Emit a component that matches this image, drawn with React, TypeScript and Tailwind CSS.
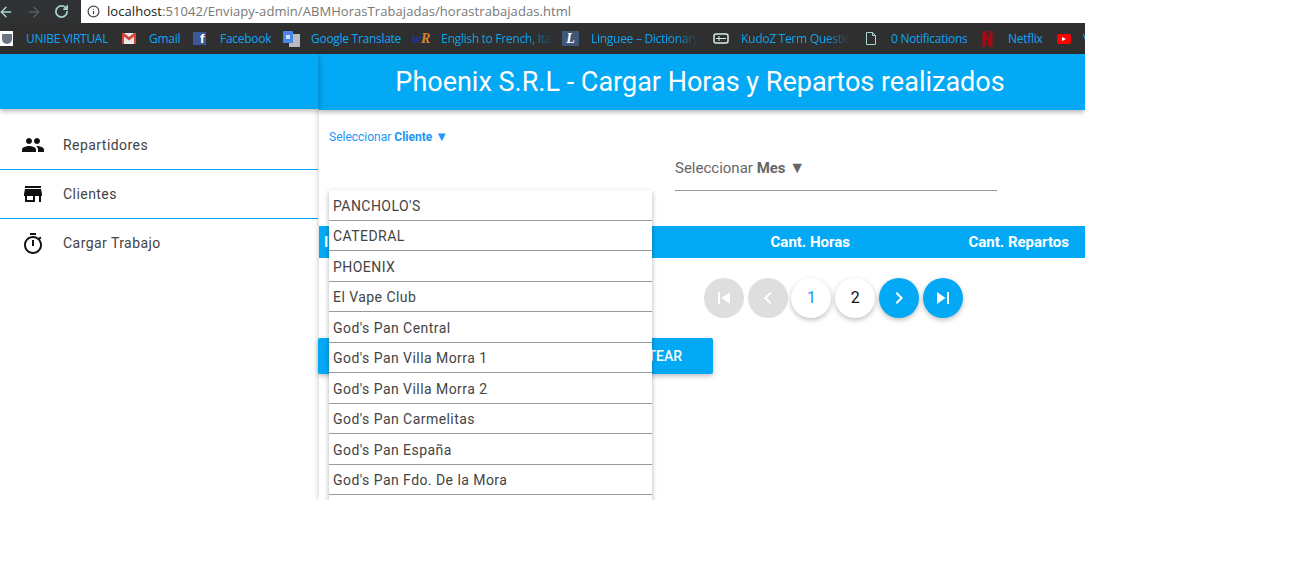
import { ArrowLeft, ArrowRight, RotateCw, Info } from "lucide-react"

const clientes = [
  "PANCHOLO'S",
  "CATEDRAL",
  "PHOENIX",
  "El Vape Club",
  "God's Pan Central",
  "God's Pan Villa Morra 1",
  "God's Pan Villa Morra 2",
  "God's Pan Carmelitas",
  "God's Pan España",
  "God's Pan Fdo. De la Mora",
  "God's Pan Luque",
]

function MaterialIcon({ d, className }: { d: string; className?: string }) {
  return (
    <svg viewBox="0 0 24 24" className={className} fill="currentColor">
      <path d={d} />
    </svg>
  )
}

const icons = {
  people:
    "M16 11c1.66 0 2.99-1.34 2.99-3S17.66 5 16 5c-1.66 0-3 1.34-3 3s1.34 3 3 3zm-8 0c1.66 0 2.99-1.34 2.99-3S9.66 5 8 5C6.34 5 5 6.34 5 8s1.34 3 3 3zm0 2c-2.33 0-7 1.17-7 3.5V19h14v-2.5c0-2.33-4.67-3.5-7-3.5zm8 0c-.29 0-.62.02-.97.05 1.16.84 1.97 1.97 1.97 3.45V19h6v-2.5c0-2.33-4.67-3.5-7-3.5z",
  store: "M20 4H4v2h16V4zm1 10v-2l-1-5H4l-1 5v2h1v6h10v-6h4v6h2v-6h1zm-9 4H6v-4h6v4z",
  timer:
    "M15 1H9v2h6V1zm-4 13h2V8h-2v6zm8.03-6.61l1.42-1.42c-.43-.51-.9-.99-1.41-1.41l-1.42 1.42C16.07 4.74 14.12 4 12 4c-4.97 0-9 4.03-9 9s4.02 9 9 9 9-4.03 9-9c0-2.12-.74-4.07-1.97-5.61zM12 20c-3.87 0-7-3.13-7-7s3.13-7 7-7 7 3.13 7 7-3.13 7-7 7z",
  first: "M6 6h2v12H6zm3.5 6l8.5 6V6z",
  prev: "M15.41 7.41L14 6l-6 6 6 6 1.41-1.41L10.83 12z",
  next: "M10 6L8.59 7.41 13.17 12l-4.58 4.59L10 18l6-6z",
  last: "M6 18l8.5-6L6 6v12zM16 6v12h2V6h-2z",
}

function BrowserBar() {
  return (
    <div className="flex h-[23px] bg-[#2f3133]">
      <div className="flex w-[81px] items-center text-[#a5d6cf]">
        <ArrowLeft className="ml-[-2px] h-[16px] w-[16px]" strokeWidth={2.2} />
        <ArrowRight className="ml-[12px] h-[16px] w-[16px] text-[#55605e]" strokeWidth={2.2} />
        <RotateCw className="ml-[12px] h-[15px] w-[15px]" strokeWidth={2.8} />
      </div>
      <div className="flex flex-1 items-center bg-white pl-[6px] font-['Open_Sans',sans-serif] text-[13px] tracking-[0.06px] text-[#777]">
        <Info className="mr-[7px] h-[13px] w-[13px] text-[#444]" strokeWidth={2.2} />
        <span className="text-[#222]">localhost</span>:51042/Enviapy-admin/ABMHorasTrabajadas/horastrabajadas.html
      </div>
    </div>
  )
}

function Bookmark({
  label,
  width,
  icon,
  fade,
}: {
  label: string
  width: string
  icon: React.ReactNode
  fade?: boolean
}) {
  return (
    <div className={`flex shrink-0 items-center ${width}`}>
      {icon}
      <span
        className={`min-w-0 overflow-hidden whitespace-nowrap pt-[1px] ${fade ? "[mask-image:linear-gradient(to_right,black_78%,transparent)]" : ""}`}
      >
        {label}
      </span>
    </div>
  )
}

function BookmarksBar() {
  return (
    <div className="flex h-[31px] items-center overflow-hidden bg-[#2f2f2f] font-['Open_Sans',sans-serif] text-[12px] tracking-[-0.28px] text-[#0ea5f7]">
      <Bookmark
        width="w-[122px]"
        label="UNIBE VIRTUAL"
        icon={
          <div className="mr-[13px] flex h-[15px] w-[13px] shrink-0 items-center justify-center bg-white">
            <div className="h-[10px] w-[10px] rounded-b-full bg-[#6b7280]" />
          </div>
        }
      />
      <Bookmark
        width="w-[71px]"
        label="Gmail"
        icon={
          <svg viewBox="0 0 14 11" className="mr-[13px] h-[11px] w-[14px] shrink-0">
            <rect width="14" height="11" fill="#e8e8e8" />
            <path d="M0 0h2l5 4 5-4h2v11h-2V3.5L7 7.5 2 3.5V11H0z" fill="#d44638" />
          </svg>
        }
      />
      <Bookmark
        width="w-[90px]"
        label="Facebook"
        icon={
          <div className="mr-[14px] flex h-[13px] w-[13px] shrink-0 items-end justify-end bg-[#3b5998] pr-[2px] font-['Liberation_Sans',sans-serif] text-[13px] font-bold leading-[13px] text-white">
            f
          </div>
        }
      />
      <Bookmark
        width="w-[129px]"
        label="Google Translate"
        icon={
          <svg viewBox="0 0 17 16" className="mr-[11px] h-[16px] w-[17px] shrink-0">
            <rect x="6" y="3" width="11" height="13" fill="#b8bcc0" />
            <rect width="10" height="12" rx="1" fill="#4a86e8" />
            <rect x="3" y="4" width="4" height="4" fill="#cfe0fb" />
          </svg>
        }
      />
      <Bookmark
        width="w-[150px] pr-[9px]"
        label="English to French, Italian"
        fade
        icon={
          <span className="mr-[11px] w-[18px] shrink-0 font-['Liberation_Serif',serif] text-[14px] font-bold italic">
            <span className="text-[#1a2fb0]">w</span>
            <span className="text-[#d9822b]">R</span>
          </span>
        }
      />
      <Bookmark
        width="w-[146px] pr-[9px]"
        label="Linguee – Dictionary"
        fade
        icon={
          <div className="mr-[12px] flex h-[15px] w-[17px] shrink-0 items-center justify-center bg-[#3f5878] font-['Liberation_Serif',serif] text-[14px] font-bold italic leading-[15px] text-white">
            L
          </div>
        }
      />
      <Bookmark
        width="w-[148px] pr-[5px]"
        label="KudoZ Term Question"
        fade
        icon={
          <svg viewBox="0 0 16 11" className="mr-[12px] ml-[5px] h-[11px] w-[16px] shrink-0" fill="none">
            <rect x="1" y="1" width="14" height="9" rx="2" stroke="#d8efe9" strokeWidth="1.5" />
            <path d="M3 5.5h10M6 3v5" stroke="#d8efe9" />
          </svg>
        }
      />
      <Bookmark
        width="w-[126px]"
        label="0 Notifications"
        icon={
          <svg viewBox="0 0 10 13" className="mr-[15px] ml-[10px] h-[13px] w-[10px] shrink-0" fill="none" stroke="#a5d6cf">
            <path d="M.5.5h6l3 3v9h-9zM6.5.5v3h3" />
          </svg>
        }
      />
      <Bookmark
        width="w-[74px]"
        label="Netflix"
        icon={
          <svg viewBox="0 0 10 16" className="mr-[15px] h-[16px] w-[11px] shrink-0">
            <path d="M0 0h3l4 10V0h3v16H7L3 6v10H0z" fill="#b1060f" />
          </svg>
        }
      />
      <Bookmark
        width="w-[30px]"
        label="V"
        icon={
          <div className="mr-[12px] ml-[1px] flex h-[10px] w-[14px] shrink-0 items-center justify-center rounded-[2px] bg-[#f00]">
            <div className="h-0 w-0 border-y-[2.5px] border-l-[4px] border-y-transparent border-l-white" />
          </div>
        }
      />
    </div>
  )
}

function Sidebar() {
  const items = [
    { label: "Repartidores", icon: icons.people },
    { label: "Clientes", icon: icons.store },
    { label: "Cargar Trabajo", icon: icons.timer },
  ]
  return (
    <aside className="relative z-10 flex w-[318px] shrink-0 flex-col">
      <div className="-mr-[1px] h-[55px] border-r border-[#0398dc] bg-[#03a9f4] shadow-[0_2px_5px_rgba(0,0,0,0.3)]" />
      <div className="pt-[12px]">
        {items.map((item, i) => (
          <div
            key={item.label}
            className={`flex h-[49px] items-center pl-[21px] ${i < 2 ? "border-b border-[#03a9f4]" : ""}`}
          >
            <MaterialIcon d={item.icon} className="h-[24px] w-[24px] text-[#111]" />
            <span className="ml-[18px] text-[14px] tracking-[0.45px] text-[#444]">{item.label}</span>
          </div>
        ))}
      </div>
    </aside>
  )
}

function PageButton({
  children,
  variant,
}: {
  children: React.ReactNode
  variant: "disabled" | "plain" | "blue"
}) {
  const styles = {
    disabled: "bg-[#dedede] text-white",
    plain: "bg-white shadow-[0_2px_5px_rgba(0,0,0,0.26)]",
    blue: "bg-[#03a9f4] text-white shadow-[0_2px_5px_rgba(0,0,0,0.26)]",
  }
  return (
    <div className={`flex h-[40px] w-[40px] items-center justify-center rounded-full ${styles[variant]}`}>
      {children}
    </div>
  )
}

function Main() {
  return (
    <main className="relative ml-[1px] flex min-w-0 flex-1 flex-col shadow-[-2px_0_4px_rgba(0,0,0,0.12)]">
      <header className="flex h-[56px] items-center justify-center bg-[#03a9f4] pr-[4px] text-[27px] text-white shadow-[0_2px_5px_rgba(0,0,0,0.3)]">
        Phoenix S.R.L - Cargar Horas y Repartos realizados
      </header>

      <div className="mt-[20px] h-[14px] pl-[10px] text-[12px] leading-[14px] text-[#2196f3]">
        Seleccionar <b className="font-bold">Cliente</b> <span className="text-[13px] leading-none">▼</span>
      </div>

      <div className="mt-[14px] ml-[356px] w-[322px] border-b border-[#999] pb-[12px] text-[15px] leading-[20px] text-[#666]">
        Seleccionar <b className="font-bold">Mes</b> <span className="text-[16px] leading-none">▼</span>
      </div>

      <div className="mt-[35px] grid h-[32px] grid-cols-[5px_1fr_auto_219px] items-center bg-[#03a9f4] pl-[5px] pr-[16px] text-[15px] font-bold text-white">
        <span className="overflow-hidden">I</span>
        <span />
        <span className="text-center">Cant. Horas</span>
        <span className="text-right">Cant. Repartos</span>
      </div>

      <div className="mt-[20px] ml-[384.8px] flex gap-[3.8px]">
        <PageButton variant="disabled">
          <MaterialIcon d={icons.first} className="h-[24px] w-[24px]" />
        </PageButton>
        <PageButton variant="disabled">
          <MaterialIcon d={icons.prev} className="h-[24px] w-[24px]" />
        </PageButton>
        <PageButton variant="plain">
          <span className="text-[16px] text-[#2196f3]">1</span>
        </PageButton>
        <PageButton variant="plain">
          <span className="text-[16px] text-[#111]">2</span>
        </PageButton>
        <PageButton variant="blue">
          <MaterialIcon d={icons.next} className="h-[24px] w-[24px]" />
        </PageButton>
        <PageButton variant="blue">
          <MaterialIcon d={icons.last} className="h-[24px] w-[24px]" />
        </PageButton>
      </div>

      <div className="mt-[20px] -ml-[1px] flex h-[36px] w-[395px] items-center justify-end rounded-[2px] bg-[#03a9f4] pr-[31px] text-[14px] font-medium text-white shadow-[0_2px_5px_rgba(0,0,0,0.26)]">
        SETEAR
      </div>

      {/* lista de clientes abierta, tapa la tabla y el boton */}
      <ul className="absolute left-[10px] top-[136px] w-[323px] bg-white shadow-[0_2px_5px_rgba(0,0,0,0.3)]">
        {clientes.map((c) => (
          <li
            key={c}
            className="flex h-[30.5px] items-center border-b border-[#999] pl-[4px] pt-[3px] text-[14px] tracking-[0.45px] text-[#444]"
          >
            {c}
          </li>
        ))}
      </ul>
    </main>
  )
}

export default function App() {
  return (
    <div className="h-[500px] w-[1085px] overflow-hidden bg-white font-['Roboto',sans-serif]">
      <BrowserBar />
      <BookmarksBar />
      <div className="flex h-[446px]">
        <Sidebar />
        <Main />
      </div>
    </div>
  )
}
